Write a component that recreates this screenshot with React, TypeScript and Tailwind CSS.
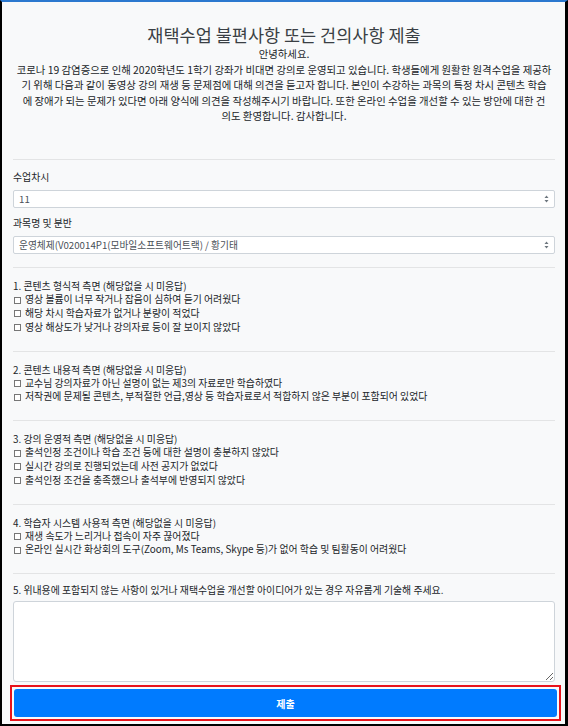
const font = {
  fontFamily: '"Noto Sans CJK KR", "Noto Sans", sans-serif',
};

const sections = [
  {
    title: "1. 콘텐츠 형식적 측면 (해당없을 시 미응답)",
    items: [
      "영상 볼륨이 너무 작거나 잡음이 심하여 듣기 어려웠다",
      "해당 차시 학습자료가 없거나 분량이 적었다",
      "영상 해상도가 낮거나 강의자료 등이 잘 보이지 않았다",
    ],
  },
  {
    title: "2. 콘텐츠 내용적 측면 (해당없을 시 미응답)",
    items: [
      "교수님 강의자료가 아닌 설명이 없는 제3의 자료로만 학습하였다",
      "저작권에 문제될 콘텐츠, 부적절한 언급,영상 등 학습자료로서 적합하지 않은 부분이 포함되어 있었다",
    ],
  },
  {
    title: "3. 강의 운영적 측면 (해당없을 시 미응답)",
    items: [
      "출석인정 조건이나 학습 조건 등에 대한 설명이 충분하지 않았다",
      "실시간 강의로 진행되었는데 사전 공지가 없었다",
      "출석인정 조건을 충족했으나 출석부에 반영되지 않았다",
    ],
  },
  {
    title: "4. 학습자 시스템 사용적 측면 (해당없을 시 미응답)",
    items: [
      "재생 속도가 느리거나 접속이 자주 끊어졌다",
      "온라인 실시간 화상회의 도구(Zoom, Ms Teams, Skype 등)가 없어 학습 및 팀활동이 어려웠다",
    ],
  },
];

const SelectBox = ({ value }: { value: string }) => (
  <div className="h-[18px] bg-white border border-[#ced4da] rounded-[2px] flex items-center justify-between pl-[5px] pr-[5px] text-[9.7px] text-[#495057]">
    <span>{value}</span>
    <svg width="5" height="8" viewBox="0 0 5 8">
      <path d="M2.5 0.5 L4.5 3 L0.5 3 Z" fill="#6c757d" />
      <path d="M2.5 7.5 L4.5 5 L0.5 5 Z" fill="#6c757d" />
    </svg>
  </div>
);

export default function App() {
  return (
    <div
      style={font}
      className="w-[568px] h-[726px] bg-[#f8f9fa] border-t-2 border-t-[#2b78cf] border-l-2 border-l-black border-r-[3px] border-r-black border-b-2 border-b-black text-[#212529] flex flex-col"
    >
      <div className="pl-[11px] pr-[10px] pt-[23px] flex flex-col">
        <h1 className="text-center text-[17.5px] leading-[20px] text-[#3a3f44]">
          재택수업 불편사항 또는 건의사항 제출
        </h1>
        <p className="text-center text-[10.4px] leading-[15px] mt-[1px]">안녕하세요.</p>
        {/* line breaks follow the original page */}
        <p className="text-center text-[10.4px] leading-[15.3px] mt-[1px] whitespace-nowrap">
          코로나 19 감염증으로 인해 2020학년도 1학기 강좌가 비대면 강의로 운영되고 있습니다. 학생들에게 원활한 원격수업을 제공하
          <br />
          기 위해 다음과 같이 동영상 강의 재생 등 문제점에 대해 의견을 듣고자 합니다. 본인이 수강하는 과목의 특정 차시 콘텐츠 학습
          <br />
          에 장애가 되는 문제가 있다면 아래 양식에 의견을 작성해주시기 바랍니다. 또한 온라인 수업을 개선할 수 있는 방안에 대한 건
          <br />
          의도 환영합니다. 감사합니다.
        </p>
        <hr className="border-t border-[#e3e4e5] mt-[36px]" />

        <div className="text-[9.9px] leading-[14px] mt-[10px]">수업차시</div>
        <div className="mt-[6px]">
          <SelectBox value="11" />
        </div>
        <div className="text-[9.9px] leading-[14px] mt-[8px]">과목명 및 분반</div>
        <div className="mt-[6px]">
          <SelectBox value="운영체제(V020014P1(모바일소프트웨어트랙) / 황기태" />
        </div>
        <hr className="border-t border-[#e3e4e5] mt-[13px]" />

        {sections.map((s) => (
          <div key={s.title}>
            <div className="text-[9.9px] leading-[14px] mt-[11px]">{s.title}</div>
            {s.items.map((it) => (
              <div key={it} className="text-[9.9px] leading-[13.8px] flex items-center">
                <span className="inline-block w-[7px] h-[7px] border border-[#767676] bg-white mr-[4px] ml-[1px]" />
                {it}
              </div>
            ))}
            <hr className="border-t border-[#e3e4e5] mt-[16px]" />
          </div>
        ))}

        <div className="text-[9.9px] leading-[14px] mt-[9px]">
          5. 위내용에 포함되지 않는 사항이 있거나 재택수업을 개선할 아이디어가 있는 경우 자유롭게 기술해 주세요.
        </div>
        <textarea className="mt-[4px] h-[81px] bg-white border border-[#ced4da] rounded-[3px] resize-y" />
      </div>
      <div className="ml-[8px] mr-[4px] mt-[3px] border-2 border-[#e8121b] p-[2px]">
        <button className="block w-full h-[28px] bg-[#007bff] rounded-[3px] text-white text-[10px] font-bold">
          제출
        </button>
      </div>
    </div>
  );
}
